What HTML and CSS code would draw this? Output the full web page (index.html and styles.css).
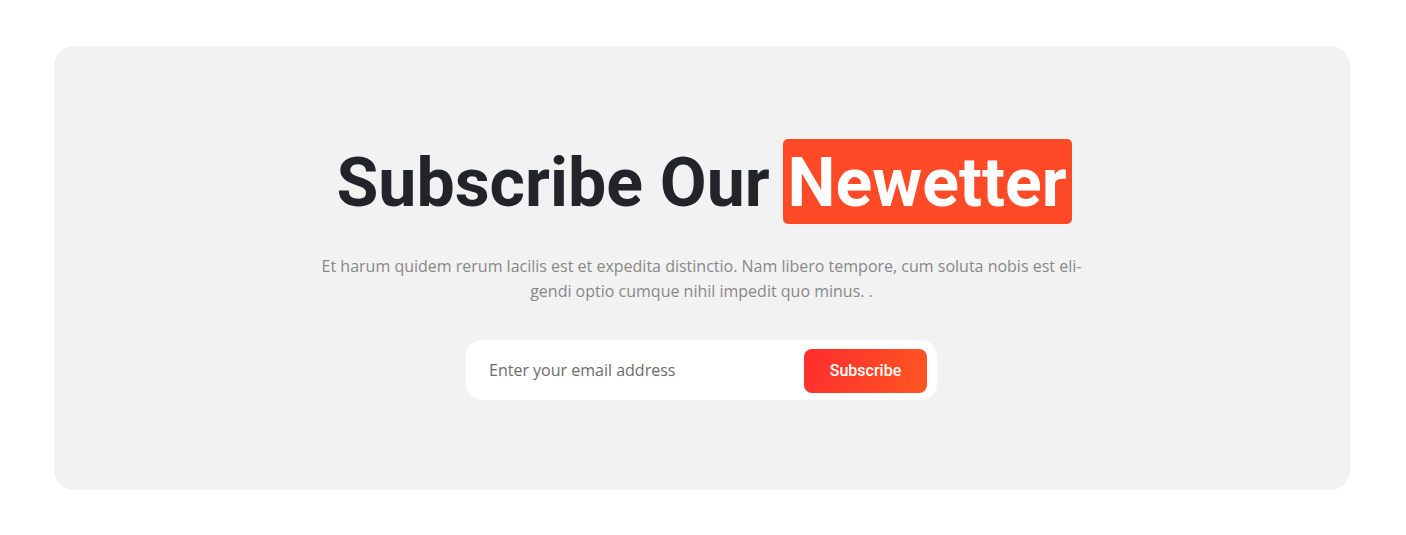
FILE: index.html
```html
<!DOCTYPE html>
<html lang="en">
<head>
<meta charset="utf-8">
<meta name="viewport" content="width=device-width, initial-scale=1">
<title>Subscribe</title>
<link rel="stylesheet" href="styles.css">
</head>
<body>
<main class="page">
  <section class="newsletter">
    <h1 class="title">Subscribe Our <span class="highlight">Newetter</span></h1>
    <p class="lead">Et harum quidem rerum lacilis est et expedita distinctio. Nam libero tempore, cum soluta nobis est eli&shy;gendi optio cumque nihil impedit quo minus. .</p>
    <form class="form">
      <input class="email" type="email" placeholder="Enter your email address" aria-label="Email address">
      <button class="submit" type="submit">Subscribe</button>
    </form>
  </section>
</main>
</body>
</html>
```

FILE: styles.css
```css
* {
  box-sizing: border-box;
}

body {
  margin: 0;
  background: #fff;
  font-family: "Open Sans", sans-serif;
}

.page {
  padding: 46px 56px 45px 54px;
}

.newsletter {
  display: flex;
  flex-direction: column;
  align-items: center;
  padding: 93px 25px 90px 24px;
  border-radius: 20px;
  background: #f2f2f2;
  text-align: center;
}

.title {
  margin: 0 0 30px;
  padding-left: 5px;
  color: #232429;
  font: 700 68px/81px Roboto, sans-serif;
}

.highlight {
  display: inline-block;
  margin-left: -4px;
  padding: 4px 5px 0;
  border-radius: 5px;
  background: #ff4a27;
  color: #fff;
}

.lead {
  max-width: 770px;
  margin: 0 0 36px;
  color: #888;
  font-size: 16px;
  line-height: 25px;
}

.form {
  display: flex;
  width: 100%;
  max-width: 471px;
  padding: 9px 10px 7px 23px;
  border-radius: 16px;
  background: #fff;
}

.email {
  flex: 1;
  min-width: 0;
  padding: 0 0 2px;
  border: 0;
  outline: 0;
  background: none;
  color: #333;
  font: 16px/24px "Open Sans", sans-serif;
}

.email::placeholder {
  color: #6c6c6c;
  opacity: 1;
}

.submit {
  width: 123px;
  height: 44px;
  padding: 0;
  border: 0;
  border-radius: 8px;
  background: linear-gradient(110deg, #ff2d2d, #ff5722);
  color: #fff;
  font: 500 16px/24px Roboto, sans-serif;
}
```
